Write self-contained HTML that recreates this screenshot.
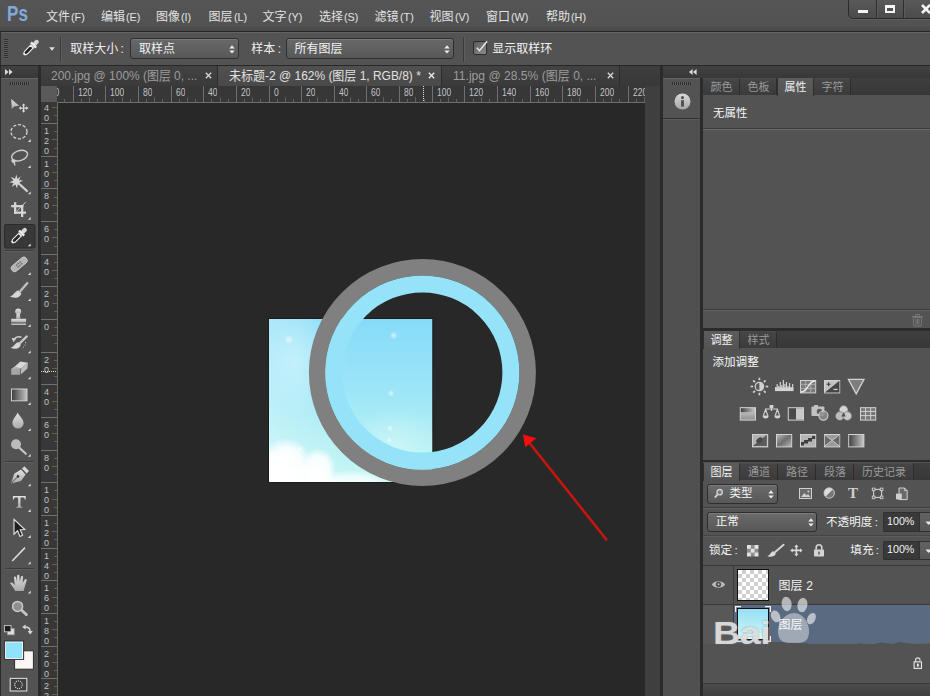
<!DOCTYPE html>
<html lang="zh"><head><meta charset="utf-8"><title>Photoshop</title>
<style>
html,body{margin:0;padding:0;}
html{width:930px;height:696px;overflow:hidden;background:#535353;}
body{width:930px;height:696px;overflow:hidden;background:#535353;font-family:"Liberation Sans","Noto Sans CJK SC",sans-serif;position:relative;}
#app{position:absolute;left:0;top:0;width:930px;height:696px;overflow:hidden;}
.b{position:absolute;box-sizing:border-box;display:block;}
.t{position:absolute;white-space:nowrap;transform-origin:0 50%;}
.cj{display:inline-block;overflow:visible;vertical-align:baseline;}
.cj text{font-family:"Liberation Sans",sans-serif;}
</style></head>
<body>
<div id="app">
<div class="b" style="left:0px;top:0px;width:930px;height:31px;background:linear-gradient(#555 0,#525252 82%,#484848 100%);"></div>
<div class="b" style="left:0px;top:31px;width:930px;height:1px;background:#262626;"></div>
<span class="t" style="left:7.4px;top:1.9px;font-size:22.5px;line-height:24.5px;color:#80aadb;transform:scaleX(0.76);font-weight:bold;letter-spacing:0.2px;">Ps</span>
<span class="t" style="left:45.9px;top:9.5px;font-size:12px;line-height:14px;color:#e2e2e2;">文件<svg class="cj" style="margin-left:1.4px" width="13.79" height="8.64" fill="#e2e2e2"><text x="0" y="8.64" font-size="10.8" textLength="13.79" lengthAdjust="spacingAndGlyphs" style="white-space:pre">(F)</text></svg></span>
<span class="t" style="left:100.9px;top:9.5px;font-size:12px;line-height:14px;color:#e2e2e2;">编辑<svg class="cj" style="margin-left:1.4px" width="14.4" height="8.64" fill="#e2e2e2"><text x="0" y="8.64" font-size="10.8" textLength="14.4" lengthAdjust="spacingAndGlyphs" style="white-space:pre">(E)</text></svg></span>
<span class="t" style="left:155.9px;top:9.5px;font-size:12px;line-height:14px;color:#e2e2e2;">图像<svg class="cj" style="margin-left:1.4px" width="10.19" height="8.64" fill="#e2e2e2"><text x="0" y="8.64" font-size="10.8" textLength="10.19" lengthAdjust="spacingAndGlyphs" style="white-space:pre">(I)</text></svg></span>
<span class="t" style="left:208.4px;top:9.5px;font-size:12px;line-height:14px;color:#e2e2e2;">图层<svg class="cj" style="margin-left:1.4px" width="13.2" height="8.64" fill="#e2e2e2"><text x="0" y="8.64" font-size="10.8" textLength="13.2" lengthAdjust="spacingAndGlyphs" style="white-space:pre">(L)</text></svg></span>
<span class="t" style="left:262.4px;top:9.5px;font-size:12px;line-height:14px;color:#e2e2e2;">文字<svg class="cj" style="margin-left:1.4px" width="14.4" height="8.64" fill="#e2e2e2"><text x="0" y="8.64" font-size="10.8" textLength="14.4" lengthAdjust="spacingAndGlyphs" style="white-space:pre">(Y)</text></svg></span>
<span class="t" style="left:318.9px;top:9.5px;font-size:12px;line-height:14px;color:#e2e2e2;">选择<svg class="cj" style="margin-left:1.4px" width="14.4" height="8.64" fill="#e2e2e2"><text x="0" y="8.64" font-size="10.8" textLength="14.4" lengthAdjust="spacingAndGlyphs" style="white-space:pre">(S)</text></svg></span>
<span class="t" style="left:374.4px;top:9.5px;font-size:12px;line-height:14px;color:#e2e2e2;">滤镜<svg class="cj" style="margin-left:1.4px" width="13.79" height="8.64" fill="#e2e2e2"><text x="0" y="8.64" font-size="10.8" textLength="13.79" lengthAdjust="spacingAndGlyphs" style="white-space:pre">(T)</text></svg></span>
<span class="t" style="left:429.4px;top:9.5px;font-size:12px;line-height:14px;color:#e2e2e2;">视图<svg class="cj" style="margin-left:1.4px" width="14.4" height="8.64" fill="#e2e2e2"><text x="0" y="8.64" font-size="10.8" textLength="14.4" lengthAdjust="spacingAndGlyphs" style="white-space:pre">(V)</text></svg></span>
<span class="t" style="left:485.9px;top:9.5px;font-size:12px;line-height:14px;color:#e2e2e2;">窗口<svg class="cj" style="margin-left:1.4px" width="17.39" height="8.64" fill="#e2e2e2"><text x="0" y="8.64" font-size="10.8" textLength="17.39" lengthAdjust="spacingAndGlyphs" style="white-space:pre">(W)</text></svg></span>
<span class="t" style="left:545.9px;top:9.5px;font-size:12px;line-height:14px;color:#e2e2e2;">帮助<svg class="cj" style="margin-left:1.4px" width="14.99" height="8.64" fill="#e2e2e2"><text x="0" y="8.64" font-size="10.8" textLength="14.99" lengthAdjust="spacingAndGlyphs" style="white-space:pre">(H)</text></svg></span>
<div class="b" style="left:848px;top:-2px;width:90px;height:21px;background:linear-gradient(#5a5a5a,#4b4b4b);border:1px solid #2c2c2c;border-radius:0 0 0 5px;box-shadow:0 1px 0 #5d5d5d;"></div>
<div class="b" style="left:876px;top:0px;width:1px;height:18px;background:#2f2f2f;"></div>
<div class="b" style="left:877px;top:0px;width:1px;height:18px;background:#5b5b5b;"></div>
<div class="b" style="left:903px;top:0px;width:1px;height:18px;background:#2f2f2f;"></div>
<div class="b" style="left:904px;top:0px;width:1px;height:18px;background:#5b5b5b;"></div>
<div class="b" style="left:858px;top:10px;width:10px;height:3px;background:#f4f4f4;"></div>
<div class="b" style="left:885px;top:5px;width:10px;height:8px;border:2px solid #f4f4f4;border-top-width:3px;"></div>
<svg class="b" style="left:920px;top:4px;" width="12" height="10" viewBox="0 0 12 10"><path d="M2 1 L10 9 M10 1 L2 9" stroke="#f4f4f4" stroke-width="2.6" fill="none"/></svg>
<div class="b" style="left:0px;top:32px;width:930px;height:1px;background:#636363;"></div>
<div class="b" style="left:0px;top:33px;width:930px;height:32px;background:#535353;"></div>
<div class="b" style="left:0px;top:65px;width:930px;height:1px;background:#282828;"></div>
<div class="b" style="left:0px;top:32px;width:1px;height:33px;background:#2e2e2e;"></div>
<div class="b" style="left:4px;top:39px;width:4px;height:20px;background:repeating-linear-gradient(#2f2f2f 0,#2f2f2f 1px,#5d5d5d 1px,#5d5d5d 2px);"></div>
<svg class="b" style="left:20px;top:34px" width="24" height="28" viewBox="20 34 24 28"><g transform="translate(31.1 47.45) rotate(45)"><rect x="-2.1" y="-10" width="4.2" height="6.4" rx="2.1" fill="#d6d6d6"/><rect x="-3.7" y="-4.6" width="7.4" height="2.3" fill="#ececec"/><rect x="-2.5" y="-2.4" width="5" height="1.6" fill="#cfcfcf"/><path d="M-1.9 -0.9 H1.9 V7.4 L0.9 9.6 H-0.9 L-1.9 7.4 Z" fill="#242424" stroke="#ededed" stroke-width="1.1" stroke-linejoin="round"/><circle cx="0" cy="9.4" r="1" fill="#f2f2f2"/></g></svg>
<svg class="b" style="left:48.8px;top:46.5px;" width="6" height="4" viewBox="0 0 6 4"><path d="M0.2 0.3 H5.8 L3 3.7 Z" fill="#e2e2e2"/></svg>
<div class="b" style="left:60px;top:37px;width:1px;height:25px;background:#3a3a3a;"></div>
<div class="b" style="left:61px;top:37px;width:1px;height:25px;background:#5e5e5e;"></div>
<span class="t" style="left:70.2px;top:41.8px;font-size:12px;line-height:14px;color:#efefef;">取样大小<span style="margin-left:2.4px">:</span></span>
<div class="b" style="left:129.8px;top:38px;width:109.2px;height:21px;background:linear-gradient(#686868,#585858);border:1px solid #2e2e2e;border-radius:3px;box-shadow:inset 0 1px 0 #7a7a7a;"></div>
<span class="t" style="left:139px;top:41.8px;font-size:12px;line-height:14px;color:#f2f2f2;">取样点</span>
<svg class="b" style="left:229px;top:44.5px;" width="6" height="9" viewBox="0 0 6 9"><path d="M0.3 3.4 L3 0.3 L5.7 3.4 Z M0.3 5.4 L3 8.5 L5.7 5.4 Z" fill="#ededed"/></svg>
<span class="t" style="left:251.3px;top:41.8px;font-size:12px;line-height:14px;color:#efefef;">样本<span style="margin-left:2.4px">:</span></span>
<div class="b" style="left:286px;top:38px;width:167.5px;height:21px;background:linear-gradient(#686868,#585858);border:1px solid #2e2e2e;border-radius:3px;box-shadow:inset 0 1px 0 #7a7a7a;"></div>
<span class="t" style="left:294.6px;top:41.8px;font-size:12px;line-height:14px;color:#f2f2f2;">所有图层</span>
<svg class="b" style="left:443.7px;top:44.5px;" width="6" height="9" viewBox="0 0 6 9"><path d="M0.3 3.4 L3 0.3 L5.7 3.4 Z M0.3 5.4 L3 8.5 L5.7 5.4 Z" fill="#ededed"/></svg>
<div class="b" style="left:463px;top:37px;width:1px;height:25px;background:#3a3a3a;"></div>
<div class="b" style="left:464px;top:37px;width:1px;height:25px;background:#5e5e5e;"></div>
<div class="b" style="left:473px;top:41px;width:14px;height:14px;background:linear-gradient(135deg,#5c5c5c,#8c8c8c);border:1px solid #2b2b2b;border-radius:2px;"></div>
<svg class="b" style="left:473px;top:38px;" width="17" height="17" viewBox="0 0 17 17"><path d="M3.8 9.8 L6.5 12.7 L14.1 3.2" fill="none" stroke="#e8e8e8" stroke-width="1.5"/></svg>
<span class="t" style="left:492.3px;top:41.8px;font-size:12px;line-height:14px;color:#f4f4f4;">显示取样环</span>
<div class="b" style="left:0px;top:66px;width:930px;height:12px;background:linear-gradient(#414141,#383838);"></div>
<div class="b" style="left:0px;top:66px;width:1px;height:630px;background:#2a2a2a;"></div>
<div class="b" style="left:38px;top:66px;width:2.5px;height:630px;background:#2b2b2b;"></div>
<div class="b" style="left:660px;top:66px;width:3px;height:630px;background:#2b2b2b;"></div>
<div class="b" style="left:700px;top:66px;width:3px;height:630px;background:#2b2b2b;"></div>
<div class="b" style="left:663px;top:66px;width:267px;height:12px;background:linear-gradient(#414141,#383838);"></div>
<svg class="b" style="left:5px;top:69px;" width="8" height="6" viewBox="0 0 8 6"><path d="M0 0 L3.6 3 L0 6 Z M4 0 L7.6 3 L4 6 Z" fill="#dcdcdc"/></svg>
<svg class="b" style="left:689px;top:69px;" width="8" height="6" viewBox="0 0 8 6"><path d="M3.6 0 L0 3 L3.6 6 Z M7.6 0 L4 3 L7.6 6 Z" fill="#dcdcdc"/></svg>
<div class="b" style="left:40.5px;top:66px;width:619.5px;height:20px;background:linear-gradient(#3e3e3e,#383838);"></div>
<div class="b" style="left:40.5px;top:66px;width:177.5px;height:20px;background:linear-gradient(#434343,#3a3a3a);border-right:1px solid #2c2c2c;"></div>
<span class="t" style="left:51px;top:69.2px;font-size:12.6px;line-height:14.6px;color:#9c9c9c;transform:scaleX(0.95);"><svg class="cj" width="101.05" height="10.08" fill="#9c9c9c"><text x="0" y="10.08" font-size="12.6" textLength="101.05" lengthAdjust="spacingAndGlyphs" style="white-space:pre">200.jpg @ 100% (</text></svg>图层<svg class="cj" width="28.01" height="10.08" fill="#9c9c9c"><text x="0" y="10.08" font-size="12.6" textLength="28.01" lengthAdjust="spacingAndGlyphs" style="white-space:pre"> 0, ...</text></svg></span>
<svg class="b" style="left:205px;top:72px;" width="7" height="7" viewBox="0 0 7 7"><path d="M0.8 0.8 L6.2 6.2 M6.2 0.8 L0.8 6.2" stroke="#dadada" stroke-width="1.25"/></svg>
<div class="b" style="left:218px;top:66px;width:224px;height:20px;background:linear-gradient(#505050,#494949);border-right:1px solid #2c2c2c;"></div>
<span class="t" style="left:229px;top:69.2px;font-size:12.6px;line-height:14.6px;color:#e0e0e0;transform:scaleX(0.95);">未标题<svg class="cj" width="70.92" height="10.08" fill="#e0e0e0"><text x="0" y="10.08" font-size="12.6" textLength="70.92" lengthAdjust="spacingAndGlyphs" style="white-space:pre">-2 @ 162% (</text></svg>图层<svg class="cj" width="67.92" height="10.08" fill="#e0e0e0"><text x="0" y="10.08" font-size="12.6" textLength="67.92" lengthAdjust="spacingAndGlyphs" style="white-space:pre"> 1, RGB/8) *</text></svg></span>
<svg class="b" style="left:428px;top:72px;" width="7" height="7" viewBox="0 0 7 7"><path d="M0.8 0.8 L6.2 6.2 M6.2 0.8 L0.8 6.2" stroke="#f0f0f0" stroke-width="1.25"/></svg>
<div class="b" style="left:442px;top:66px;width:178px;height:20px;background:linear-gradient(#434343,#3a3a3a);border-right:1px solid #2c2c2c;"></div>
<span class="t" style="left:453.3px;top:69.2px;font-size:12.6px;line-height:14.6px;color:#9c9c9c;transform:scaleX(0.95);"><svg class="cj" width="97.55" height="10.08" fill="#9c9c9c"><text x="0" y="10.08" font-size="12.6" textLength="97.55" lengthAdjust="spacingAndGlyphs" style="white-space:pre">11.jpg @ 28.5% (</text></svg>图层<svg class="cj" width="28.01" height="10.08" fill="#9c9c9c"><text x="0" y="10.08" font-size="12.6" textLength="28.01" lengthAdjust="spacingAndGlyphs" style="white-space:pre"> 0, ...</text></svg></span>
<svg class="b" style="left:606.5px;top:72px;" width="7" height="7" viewBox="0 0 7 7"><path d="M0.8 0.8 L6.2 6.2 M6.2 0.8 L0.8 6.2" stroke="#dadada" stroke-width="1.25"/></svg>
<div class="b" style="left:40.5px;top:86px;width:604.5px;height:17px;background:#373737;"></div>
<div class="b" style="left:40.5px;top:86px;width:17.5px;height:610px;background:#373737;"></div>
<div class="b" style="left:645px;top:86px;width:15px;height:610px;background:#3f3f3f;"></div>
<div class="b" style="left:40.5px;top:86px;width:16.5px;height:16px;background:#5a5a5a;"></div>
<div class="b" style="left:57px;top:102px;width:588px;height:1px;background:#6e6e6e;"></div>
<div class="b" style="left:57px;top:102px;width:1px;height:594px;background:#6e6a62;"></div>
<svg class="b" style="left:41px;top:86px;" width="604" height="16" viewBox="0 0 604 16"><rect x="23" y="13" width="1" height="3" fill="#5e5e5e"/><rect x="32" y="0" width="1" height="16" fill="#707070"/><rect x="40" y="13" width="1" height="3" fill="#5e5e5e"/><rect x="48" y="11" width="1" height="5" fill="#5e5e5e"/><rect x="56" y="13" width="1" height="3" fill="#5e5e5e"/><rect x="64" y="0" width="1" height="16" fill="#707070"/><rect x="72" y="13" width="1" height="3" fill="#5e5e5e"/><rect x="81" y="11" width="1" height="5" fill="#5e5e5e"/><rect x="89" y="13" width="1" height="3" fill="#5e5e5e"/><rect x="97" y="0" width="1" height="16" fill="#707070"/><rect x="105" y="13" width="1" height="3" fill="#5e5e5e"/><rect x="113" y="11" width="1" height="5" fill="#5e5e5e"/><rect x="121" y="13" width="1" height="3" fill="#5e5e5e"/><rect x="130" y="0" width="1" height="16" fill="#707070"/><rect x="138" y="13" width="1" height="3" fill="#5e5e5e"/><rect x="146" y="11" width="1" height="5" fill="#5e5e5e"/><rect x="154" y="13" width="1" height="3" fill="#5e5e5e"/><rect x="162" y="0" width="1" height="16" fill="#707070"/><rect x="170" y="13" width="1" height="3" fill="#5e5e5e"/><rect x="179" y="11" width="1" height="5" fill="#5e5e5e"/><rect x="187" y="13" width="1" height="3" fill="#5e5e5e"/><rect x="195" y="0" width="1" height="16" fill="#707070"/><rect x="203" y="13" width="1" height="3" fill="#5e5e5e"/><rect x="211" y="11" width="1" height="5" fill="#5e5e5e"/><rect x="219" y="13" width="1" height="3" fill="#5e5e5e"/><rect x="228" y="0" width="1" height="16" fill="#707070"/><rect x="236" y="13" width="1" height="3" fill="#5e5e5e"/><rect x="244" y="11" width="1" height="5" fill="#5e5e5e"/><rect x="252" y="13" width="1" height="3" fill="#5e5e5e"/><rect x="260" y="0" width="1" height="16" fill="#707070"/><rect x="268" y="13" width="1" height="3" fill="#5e5e5e"/><rect x="276" y="11" width="1" height="5" fill="#5e5e5e"/><rect x="285" y="13" width="1" height="3" fill="#5e5e5e"/><rect x="293" y="0" width="1" height="16" fill="#707070"/><rect x="301" y="13" width="1" height="3" fill="#5e5e5e"/><rect x="309" y="11" width="1" height="5" fill="#5e5e5e"/><rect x="317" y="13" width="1" height="3" fill="#5e5e5e"/><rect x="325" y="0" width="1" height="16" fill="#707070"/><rect x="334" y="13" width="1" height="3" fill="#5e5e5e"/><rect x="342" y="11" width="1" height="5" fill="#5e5e5e"/><rect x="350" y="13" width="1" height="3" fill="#5e5e5e"/><rect x="358" y="0" width="1" height="16" fill="#707070"/><rect x="366" y="13" width="1" height="3" fill="#5e5e5e"/><rect x="374" y="11" width="1" height="5" fill="#5e5e5e"/><rect x="383" y="13" width="1" height="3" fill="#5e5e5e"/><rect x="391" y="0" width="1" height="16" fill="#707070"/><rect x="399" y="13" width="1" height="3" fill="#5e5e5e"/><rect x="407" y="11" width="1" height="5" fill="#5e5e5e"/><rect x="415" y="13" width="1" height="3" fill="#5e5e5e"/><rect x="423" y="0" width="1" height="16" fill="#707070"/><rect x="432" y="13" width="1" height="3" fill="#5e5e5e"/><rect x="440" y="11" width="1" height="5" fill="#5e5e5e"/><rect x="448" y="13" width="1" height="3" fill="#5e5e5e"/><rect x="456" y="0" width="1" height="16" fill="#707070"/><rect x="464" y="13" width="1" height="3" fill="#5e5e5e"/><rect x="472" y="11" width="1" height="5" fill="#5e5e5e"/><rect x="481" y="13" width="1" height="3" fill="#5e5e5e"/><rect x="489" y="0" width="1" height="16" fill="#707070"/><rect x="497" y="13" width="1" height="3" fill="#5e5e5e"/><rect x="505" y="11" width="1" height="5" fill="#5e5e5e"/><rect x="513" y="13" width="1" height="3" fill="#5e5e5e"/><rect x="521" y="0" width="1" height="16" fill="#707070"/><rect x="530" y="13" width="1" height="3" fill="#5e5e5e"/><rect x="538" y="11" width="1" height="5" fill="#5e5e5e"/><rect x="546" y="13" width="1" height="3" fill="#5e5e5e"/><rect x="554" y="0" width="1" height="16" fill="#707070"/><rect x="562" y="13" width="1" height="3" fill="#5e5e5e"/><rect x="570" y="11" width="1" height="5" fill="#5e5e5e"/><rect x="578" y="13" width="1" height="3" fill="#5e5e5e"/><rect x="587" y="0" width="1" height="16" fill="#707070"/><rect x="595" y="13" width="1" height="3" fill="#5e5e5e"/><rect x="603" y="11" width="1" height="5" fill="#5e5e5e"/></svg>
<span class="t" style="left:77.6px;top:86.6px;font-size:10px;line-height:12px;color:#c4c4c4;transform:scaleX(0.85);max-width:666.94px;overflow:hidden;"><svg class="cj" width="16.68" height="8" fill="#c4c4c4"><text x="0" y="8" font-size="10" textLength="16.68" lengthAdjust="spacingAndGlyphs" style="white-space:pre">120</text></svg></span>
<span class="t" style="left:109.6px;top:86.6px;font-size:10px;line-height:12px;color:#c4c4c4;transform:scaleX(0.85);max-width:629.29px;overflow:hidden;"><svg class="cj" width="16.68" height="8" fill="#c4c4c4"><text x="0" y="8" font-size="10" textLength="16.68" lengthAdjust="spacingAndGlyphs" style="white-space:pre">100</text></svg></span>
<span class="t" style="left:142.6px;top:86.6px;font-size:10px;line-height:12px;color:#c4c4c4;transform:scaleX(0.85);max-width:590.47px;overflow:hidden;"><svg class="cj" width="11.12" height="8" fill="#c4c4c4"><text x="0" y="8" font-size="10" textLength="11.12" lengthAdjust="spacingAndGlyphs" style="white-space:pre">80</text></svg></span>
<span class="t" style="left:175.6px;top:86.6px;font-size:10px;line-height:12px;color:#c4c4c4;transform:scaleX(0.85);max-width:551.65px;overflow:hidden;"><svg class="cj" width="11.12" height="8" fill="#c4c4c4"><text x="0" y="8" font-size="10" textLength="11.12" lengthAdjust="spacingAndGlyphs" style="white-space:pre">60</text></svg></span>
<span class="t" style="left:207.6px;top:86.6px;font-size:10px;line-height:12px;color:#c4c4c4;transform:scaleX(0.85);max-width:514px;overflow:hidden;"><svg class="cj" width="11.12" height="8" fill="#c4c4c4"><text x="0" y="8" font-size="10" textLength="11.12" lengthAdjust="spacingAndGlyphs" style="white-space:pre">40</text></svg></span>
<span class="t" style="left:240.6px;top:86.6px;font-size:10px;line-height:12px;color:#c4c4c4;transform:scaleX(0.85);max-width:475.18px;overflow:hidden;"><svg class="cj" width="11.12" height="8" fill="#c4c4c4"><text x="0" y="8" font-size="10" textLength="11.12" lengthAdjust="spacingAndGlyphs" style="white-space:pre">20</text></svg></span>
<span class="t" style="left:273.6px;top:86.6px;font-size:10px;line-height:12px;color:#c4c4c4;transform:scaleX(0.85);max-width:436.35px;overflow:hidden;"><svg class="cj" width="5.56" height="8" fill="#c4c4c4"><text x="0" y="8" font-size="10" textLength="5.56" lengthAdjust="spacingAndGlyphs" style="white-space:pre">0</text></svg></span>
<span class="t" style="left:305.6px;top:86.6px;font-size:10px;line-height:12px;color:#c4c4c4;transform:scaleX(0.85);max-width:398.71px;overflow:hidden;"><svg class="cj" width="11.12" height="8" fill="#c4c4c4"><text x="0" y="8" font-size="10" textLength="11.12" lengthAdjust="spacingAndGlyphs" style="white-space:pre">20</text></svg></span>
<span class="t" style="left:338.6px;top:86.6px;font-size:10px;line-height:12px;color:#c4c4c4;transform:scaleX(0.85);max-width:359.88px;overflow:hidden;"><svg class="cj" width="11.12" height="8" fill="#c4c4c4"><text x="0" y="8" font-size="10" textLength="11.12" lengthAdjust="spacingAndGlyphs" style="white-space:pre">40</text></svg></span>
<span class="t" style="left:370.6px;top:86.6px;font-size:10px;line-height:12px;color:#c4c4c4;transform:scaleX(0.85);max-width:322.24px;overflow:hidden;"><svg class="cj" width="11.12" height="8" fill="#c4c4c4"><text x="0" y="8" font-size="10" textLength="11.12" lengthAdjust="spacingAndGlyphs" style="white-space:pre">60</text></svg></span>
<span class="t" style="left:403.6px;top:86.6px;font-size:10px;line-height:12px;color:#c4c4c4;transform:scaleX(0.85);max-width:283.41px;overflow:hidden;"><svg class="cj" width="11.12" height="8" fill="#c4c4c4"><text x="0" y="8" font-size="10" textLength="11.12" lengthAdjust="spacingAndGlyphs" style="white-space:pre">80</text></svg></span>
<span class="t" style="left:436.6px;top:86.6px;font-size:10px;line-height:12px;color:#c4c4c4;transform:scaleX(0.85);max-width:244.59px;overflow:hidden;"><svg class="cj" width="16.68" height="8" fill="#c4c4c4"><text x="0" y="8" font-size="10" textLength="16.68" lengthAdjust="spacingAndGlyphs" style="white-space:pre">100</text></svg></span>
<span class="t" style="left:468.6px;top:86.6px;font-size:10px;line-height:12px;color:#c4c4c4;transform:scaleX(0.85);max-width:206.94px;overflow:hidden;"><svg class="cj" width="16.68" height="8" fill="#c4c4c4"><text x="0" y="8" font-size="10" textLength="16.68" lengthAdjust="spacingAndGlyphs" style="white-space:pre">120</text></svg></span>
<span class="t" style="left:501.6px;top:86.6px;font-size:10px;line-height:12px;color:#c4c4c4;transform:scaleX(0.85);max-width:168.12px;overflow:hidden;"><svg class="cj" width="16.68" height="8" fill="#c4c4c4"><text x="0" y="8" font-size="10" textLength="16.68" lengthAdjust="spacingAndGlyphs" style="white-space:pre">140</text></svg></span>
<span class="t" style="left:534.6px;top:86.6px;font-size:10px;line-height:12px;color:#c4c4c4;transform:scaleX(0.85);max-width:129.29px;overflow:hidden;"><svg class="cj" width="16.68" height="8" fill="#c4c4c4"><text x="0" y="8" font-size="10" textLength="16.68" lengthAdjust="spacingAndGlyphs" style="white-space:pre">160</text></svg></span>
<span class="t" style="left:566.6px;top:86.6px;font-size:10px;line-height:12px;color:#c4c4c4;transform:scaleX(0.85);max-width:91.65px;overflow:hidden;"><svg class="cj" width="16.68" height="8" fill="#c4c4c4"><text x="0" y="8" font-size="10" textLength="16.68" lengthAdjust="spacingAndGlyphs" style="white-space:pre">180</text></svg></span>
<span class="t" style="left:599.6px;top:86.6px;font-size:10px;line-height:12px;color:#c4c4c4;transform:scaleX(0.85);max-width:52.82px;overflow:hidden;"><svg class="cj" width="16.68" height="8" fill="#c4c4c4"><text x="0" y="8" font-size="10" textLength="16.68" lengthAdjust="spacingAndGlyphs" style="white-space:pre">200</text></svg></span>
<span class="t" style="left:632.6px;top:86.6px;font-size:10px;line-height:12px;color:#c4c4c4;transform:scaleX(0.85);max-width:14px;overflow:hidden;"><svg class="cj" width="16.68" height="8" fill="#c4c4c4"><text x="0" y="8" font-size="10" textLength="16.68" lengthAdjust="spacingAndGlyphs" style="white-space:pre">220</text></svg></span>
<div class="b" style="left:57px;top:86px;width:6px;height:16px;overflow:hidden;"><span class="t" style="left:-11.8px;top:0.6px;font-size:10px;line-height:12px;color:#c4c4c4;transform:scaleX(0.85);"><svg class="cj" width="16.68" height="8" fill="#c4c4c4"><text x="0" y="8" font-size="10" textLength="16.68" lengthAdjust="spacingAndGlyphs" style="white-space:pre">140</text></svg></span></div>
<div class="b" style="left:423px;top:86px;width:1px;height:16px;background:repeating-linear-gradient(#e0e0e0 0,#e0e0e0 1px,transparent 1px,transparent 2px);"></div>
<span class="t" style="left:44.2px;top:101.1px;font-size:9.4px;line-height:11.4px;color:#c2c2c2;transform:scaleX(0.96);"><svg class="cj" width="5.23" height="7.52" fill="#c2c2c2"><text x="0" y="7.52" font-size="9.4" textLength="5.23" lengthAdjust="spacingAndGlyphs" style="white-space:pre">4</text></svg></span>
<span class="t" style="left:44.2px;top:111.1px;font-size:9.4px;line-height:11.4px;color:#c2c2c2;transform:scaleX(0.96);"><svg class="cj" width="5.23" height="7.52" fill="#c2c2c2"><text x="0" y="7.52" font-size="9.4" textLength="5.23" lengthAdjust="spacingAndGlyphs" style="white-space:pre">0</text></svg></span>
<span class="t" style="left:44.2px;top:124.1px;font-size:9.4px;line-height:11.4px;color:#c2c2c2;transform:scaleX(0.96);"><svg class="cj" width="5.23" height="7.52" fill="#c2c2c2"><text x="0" y="7.52" font-size="9.4" textLength="5.23" lengthAdjust="spacingAndGlyphs" style="white-space:pre">1</text></svg></span>
<span class="t" style="left:44.2px;top:134.1px;font-size:9.4px;line-height:11.4px;color:#c2c2c2;transform:scaleX(0.96);"><svg class="cj" width="5.23" height="7.52" fill="#c2c2c2"><text x="0" y="7.52" font-size="9.4" textLength="5.23" lengthAdjust="spacingAndGlyphs" style="white-space:pre">2</text></svg></span>
<span class="t" style="left:44.2px;top:144.1px;font-size:9.4px;line-height:11.4px;color:#c2c2c2;transform:scaleX(0.96);"><svg class="cj" width="5.23" height="7.52" fill="#c2c2c2"><text x="0" y="7.52" font-size="9.4" textLength="5.23" lengthAdjust="spacingAndGlyphs" style="white-space:pre">0</text></svg></span>
<span class="t" style="left:44.2px;top:157.1px;font-size:9.4px;line-height:11.4px;color:#c2c2c2;transform:scaleX(0.96);"><svg class="cj" width="5.23" height="7.52" fill="#c2c2c2"><text x="0" y="7.52" font-size="9.4" textLength="5.23" lengthAdjust="spacingAndGlyphs" style="white-space:pre">1</text></svg></span>
<span class="t" style="left:44.2px;top:167.1px;font-size:9.4px;line-height:11.4px;color:#c2c2c2;transform:scaleX(0.96);"><svg class="cj" width="5.23" height="7.52" fill="#c2c2c2"><text x="0" y="7.52" font-size="9.4" textLength="5.23" lengthAdjust="spacingAndGlyphs" style="white-space:pre">0</text></svg></span>
<span class="t" style="left:44.2px;top:177.1px;font-size:9.4px;line-height:11.4px;color:#c2c2c2;transform:scaleX(0.96);"><svg class="cj" width="5.23" height="7.52" fill="#c2c2c2"><text x="0" y="7.52" font-size="9.4" textLength="5.23" lengthAdjust="spacingAndGlyphs" style="white-space:pre">0</text></svg></span>
<span class="t" style="left:44.2px;top:189.1px;font-size:9.4px;line-height:11.4px;color:#c2c2c2;transform:scaleX(0.96);"><svg class="cj" width="5.23" height="7.52" fill="#c2c2c2"><text x="0" y="7.52" font-size="9.4" textLength="5.23" lengthAdjust="spacingAndGlyphs" style="white-space:pre">8</text></svg></span>
<span class="t" style="left:44.2px;top:199.1px;font-size:9.4px;line-height:11.4px;color:#c2c2c2;transform:scaleX(0.96);"><svg class="cj" width="5.23" height="7.52" fill="#c2c2c2"><text x="0" y="7.52" font-size="9.4" textLength="5.23" lengthAdjust="spacingAndGlyphs" style="white-space:pre">0</text></svg></span>
<span class="t" style="left:44.2px;top:222.1px;font-size:9.4px;line-height:11.4px;color:#c2c2c2;transform:scaleX(0.96);"><svg class="cj" width="5.23" height="7.52" fill="#c2c2c2"><text x="0" y="7.52" font-size="9.4" textLength="5.23" lengthAdjust="spacingAndGlyphs" style="white-space:pre">6</text></svg></span>
<span class="t" style="left:44.2px;top:232.1px;font-size:9.4px;line-height:11.4px;color:#c2c2c2;transform:scaleX(0.96);"><svg class="cj" width="5.23" height="7.52" fill="#c2c2c2"><text x="0" y="7.52" font-size="9.4" textLength="5.23" lengthAdjust="spacingAndGlyphs" style="white-space:pre">0</text></svg></span>
<span class="t" style="left:44.2px;top:255.1px;font-size:9.4px;line-height:11.4px;color:#c2c2c2;transform:scaleX(0.96);"><svg class="cj" width="5.23" height="7.52" fill="#c2c2c2"><text x="0" y="7.52" font-size="9.4" textLength="5.23" lengthAdjust="spacingAndGlyphs" style="white-space:pre">4</text></svg></span>
<span class="t" style="left:44.2px;top:265.1px;font-size:9.4px;line-height:11.4px;color:#c2c2c2;transform:scaleX(0.96);"><svg class="cj" width="5.23" height="7.52" fill="#c2c2c2"><text x="0" y="7.52" font-size="9.4" textLength="5.23" lengthAdjust="spacingAndGlyphs" style="white-space:pre">0</text></svg></span>
<span class="t" style="left:44.2px;top:287.1px;font-size:9.4px;line-height:11.4px;color:#c2c2c2;transform:scaleX(0.96);"><svg class="cj" width="5.23" height="7.52" fill="#c2c2c2"><text x="0" y="7.52" font-size="9.4" textLength="5.23" lengthAdjust="spacingAndGlyphs" style="white-space:pre">2</text></svg></span>
<span class="t" style="left:44.2px;top:297.1px;font-size:9.4px;line-height:11.4px;color:#c2c2c2;transform:scaleX(0.96);"><svg class="cj" width="5.23" height="7.52" fill="#c2c2c2"><text x="0" y="7.52" font-size="9.4" textLength="5.23" lengthAdjust="spacingAndGlyphs" style="white-space:pre">0</text></svg></span>
<span class="t" style="left:44.2px;top:320.1px;font-size:9.4px;line-height:11.4px;color:#c2c2c2;transform:scaleX(0.96);"><svg class="cj" width="5.23" height="7.52" fill="#c2c2c2"><text x="0" y="7.52" font-size="9.4" textLength="5.23" lengthAdjust="spacingAndGlyphs" style="white-space:pre">0</text></svg></span>
<span class="t" style="left:44.2px;top:353.1px;font-size:9.4px;line-height:11.4px;color:#c2c2c2;transform:scaleX(0.96);"><svg class="cj" width="5.23" height="7.52" fill="#c2c2c2"><text x="0" y="7.52" font-size="9.4" textLength="5.23" lengthAdjust="spacingAndGlyphs" style="white-space:pre">2</text></svg></span>
<span class="t" style="left:44.2px;top:363.1px;font-size:9.4px;line-height:11.4px;color:#c2c2c2;transform:scaleX(0.96);"><svg class="cj" width="5.23" height="7.52" fill="#c2c2c2"><text x="0" y="7.52" font-size="9.4" textLength="5.23" lengthAdjust="spacingAndGlyphs" style="white-space:pre">0</text></svg></span>
<span class="t" style="left:44.2px;top:385.1px;font-size:9.4px;line-height:11.4px;color:#c2c2c2;transform:scaleX(0.96);"><svg class="cj" width="5.23" height="7.52" fill="#c2c2c2"><text x="0" y="7.52" font-size="9.4" textLength="5.23" lengthAdjust="spacingAndGlyphs" style="white-space:pre">4</text></svg></span>
<span class="t" style="left:44.2px;top:395.1px;font-size:9.4px;line-height:11.4px;color:#c2c2c2;transform:scaleX(0.96);"><svg class="cj" width="5.23" height="7.52" fill="#c2c2c2"><text x="0" y="7.52" font-size="9.4" textLength="5.23" lengthAdjust="spacingAndGlyphs" style="white-space:pre">0</text></svg></span>
<span class="t" style="left:44.2px;top:418.1px;font-size:9.4px;line-height:11.4px;color:#c2c2c2;transform:scaleX(0.96);"><svg class="cj" width="5.23" height="7.52" fill="#c2c2c2"><text x="0" y="7.52" font-size="9.4" textLength="5.23" lengthAdjust="spacingAndGlyphs" style="white-space:pre">6</text></svg></span>
<span class="t" style="left:44.2px;top:428.1px;font-size:9.4px;line-height:11.4px;color:#c2c2c2;transform:scaleX(0.96);"><svg class="cj" width="5.23" height="7.52" fill="#c2c2c2"><text x="0" y="7.52" font-size="9.4" textLength="5.23" lengthAdjust="spacingAndGlyphs" style="white-space:pre">0</text></svg></span>
<span class="t" style="left:44.2px;top:451.1px;font-size:9.4px;line-height:11.4px;color:#c2c2c2;transform:scaleX(0.96);"><svg class="cj" width="5.23" height="7.52" fill="#c2c2c2"><text x="0" y="7.52" font-size="9.4" textLength="5.23" lengthAdjust="spacingAndGlyphs" style="white-space:pre">8</text></svg></span>
<span class="t" style="left:44.2px;top:461.1px;font-size:9.4px;line-height:11.4px;color:#c2c2c2;transform:scaleX(0.96);"><svg class="cj" width="5.23" height="7.52" fill="#c2c2c2"><text x="0" y="7.52" font-size="9.4" textLength="5.23" lengthAdjust="spacingAndGlyphs" style="white-space:pre">0</text></svg></span>
<span class="t" style="left:44.2px;top:483.1px;font-size:9.4px;line-height:11.4px;color:#c2c2c2;transform:scaleX(0.96);"><svg class="cj" width="5.23" height="7.52" fill="#c2c2c2"><text x="0" y="7.52" font-size="9.4" textLength="5.23" lengthAdjust="spacingAndGlyphs" style="white-space:pre">1</text></svg></span>
<span class="t" style="left:44.2px;top:493.1px;font-size:9.4px;line-height:11.4px;color:#c2c2c2;transform:scaleX(0.96);"><svg class="cj" width="5.23" height="7.52" fill="#c2c2c2"><text x="0" y="7.52" font-size="9.4" textLength="5.23" lengthAdjust="spacingAndGlyphs" style="white-space:pre">0</text></svg></span>
<span class="t" style="left:44.2px;top:503.1px;font-size:9.4px;line-height:11.4px;color:#c2c2c2;transform:scaleX(0.96);"><svg class="cj" width="5.23" height="7.52" fill="#c2c2c2"><text x="0" y="7.52" font-size="9.4" textLength="5.23" lengthAdjust="spacingAndGlyphs" style="white-space:pre">0</text></svg></span>
<span class="t" style="left:44.2px;top:516.1px;font-size:9.4px;line-height:11.4px;color:#c2c2c2;transform:scaleX(0.96);"><svg class="cj" width="5.23" height="7.52" fill="#c2c2c2"><text x="0" y="7.52" font-size="9.4" textLength="5.23" lengthAdjust="spacingAndGlyphs" style="white-space:pre">1</text></svg></span>
<span class="t" style="left:44.2px;top:526.1px;font-size:9.4px;line-height:11.4px;color:#c2c2c2;transform:scaleX(0.96);"><svg class="cj" width="5.23" height="7.52" fill="#c2c2c2"><text x="0" y="7.52" font-size="9.4" textLength="5.23" lengthAdjust="spacingAndGlyphs" style="white-space:pre">2</text></svg></span>
<span class="t" style="left:44.2px;top:536.1px;font-size:9.4px;line-height:11.4px;color:#c2c2c2;transform:scaleX(0.96);"><svg class="cj" width="5.23" height="7.52" fill="#c2c2c2"><text x="0" y="7.52" font-size="9.4" textLength="5.23" lengthAdjust="spacingAndGlyphs" style="white-space:pre">0</text></svg></span>
<span class="t" style="left:44.2px;top:549.1px;font-size:9.4px;line-height:11.4px;color:#c2c2c2;transform:scaleX(0.96);"><svg class="cj" width="5.23" height="7.52" fill="#c2c2c2"><text x="0" y="7.52" font-size="9.4" textLength="5.23" lengthAdjust="spacingAndGlyphs" style="white-space:pre">1</text></svg></span>
<span class="t" style="left:44.2px;top:559.1px;font-size:9.4px;line-height:11.4px;color:#c2c2c2;transform:scaleX(0.96);"><svg class="cj" width="5.23" height="7.52" fill="#c2c2c2"><text x="0" y="7.52" font-size="9.4" textLength="5.23" lengthAdjust="spacingAndGlyphs" style="white-space:pre">4</text></svg></span>
<span class="t" style="left:44.2px;top:569.1px;font-size:9.4px;line-height:11.4px;color:#c2c2c2;transform:scaleX(0.96);"><svg class="cj" width="5.23" height="7.52" fill="#c2c2c2"><text x="0" y="7.52" font-size="9.4" textLength="5.23" lengthAdjust="spacingAndGlyphs" style="white-space:pre">0</text></svg></span>
<span class="t" style="left:44.2px;top:581.1px;font-size:9.4px;line-height:11.4px;color:#c2c2c2;transform:scaleX(0.96);"><svg class="cj" width="5.23" height="7.52" fill="#c2c2c2"><text x="0" y="7.52" font-size="9.4" textLength="5.23" lengthAdjust="spacingAndGlyphs" style="white-space:pre">1</text></svg></span>
<span class="t" style="left:44.2px;top:591.1px;font-size:9.4px;line-height:11.4px;color:#c2c2c2;transform:scaleX(0.96);"><svg class="cj" width="5.23" height="7.52" fill="#c2c2c2"><text x="0" y="7.52" font-size="9.4" textLength="5.23" lengthAdjust="spacingAndGlyphs" style="white-space:pre">6</text></svg></span>
<span class="t" style="left:44.2px;top:601.1px;font-size:9.4px;line-height:11.4px;color:#c2c2c2;transform:scaleX(0.96);"><svg class="cj" width="5.23" height="7.52" fill="#c2c2c2"><text x="0" y="7.52" font-size="9.4" textLength="5.23" lengthAdjust="spacingAndGlyphs" style="white-space:pre">0</text></svg></span>
<span class="t" style="left:44.2px;top:614.1px;font-size:9.4px;line-height:11.4px;color:#c2c2c2;transform:scaleX(0.96);"><svg class="cj" width="5.23" height="7.52" fill="#c2c2c2"><text x="0" y="7.52" font-size="9.4" textLength="5.23" lengthAdjust="spacingAndGlyphs" style="white-space:pre">1</text></svg></span>
<span class="t" style="left:44.2px;top:624.1px;font-size:9.4px;line-height:11.4px;color:#c2c2c2;transform:scaleX(0.96);"><svg class="cj" width="5.23" height="7.52" fill="#c2c2c2"><text x="0" y="7.52" font-size="9.4" textLength="5.23" lengthAdjust="spacingAndGlyphs" style="white-space:pre">8</text></svg></span>
<span class="t" style="left:44.2px;top:634.1px;font-size:9.4px;line-height:11.4px;color:#c2c2c2;transform:scaleX(0.96);"><svg class="cj" width="5.23" height="7.52" fill="#c2c2c2"><text x="0" y="7.52" font-size="9.4" textLength="5.23" lengthAdjust="spacingAndGlyphs" style="white-space:pre">0</text></svg></span>
<span class="t" style="left:44.2px;top:647.1px;font-size:9.4px;line-height:11.4px;color:#c2c2c2;transform:scaleX(0.96);"><svg class="cj" width="5.23" height="7.52" fill="#c2c2c2"><text x="0" y="7.52" font-size="9.4" textLength="5.23" lengthAdjust="spacingAndGlyphs" style="white-space:pre">2</text></svg></span>
<span class="t" style="left:44.2px;top:657.1px;font-size:9.4px;line-height:11.4px;color:#c2c2c2;transform:scaleX(0.96);"><svg class="cj" width="5.23" height="7.52" fill="#c2c2c2"><text x="0" y="7.52" font-size="9.4" textLength="5.23" lengthAdjust="spacingAndGlyphs" style="white-space:pre">0</text></svg></span>
<span class="t" style="left:44.2px;top:667.1px;font-size:9.4px;line-height:11.4px;color:#c2c2c2;transform:scaleX(0.96);"><svg class="cj" width="5.23" height="7.52" fill="#c2c2c2"><text x="0" y="7.52" font-size="9.4" textLength="5.23" lengthAdjust="spacingAndGlyphs" style="white-space:pre">0</text></svg></span>
<span class="t" style="left:44.2px;top:679.1px;font-size:9.4px;line-height:11.4px;color:#c2c2c2;transform:scaleX(0.96);"><svg class="cj" width="5.23" height="7.52" fill="#c2c2c2"><text x="0" y="7.52" font-size="9.4" textLength="5.23" lengthAdjust="spacingAndGlyphs" style="white-space:pre">2</text></svg></span>
<span class="t" style="left:44.2px;top:689.1px;font-size:9.4px;line-height:11.4px;color:#c2c2c2;transform:scaleX(0.96);"><svg class="cj" width="5.23" height="7.52" fill="#c2c2c2"><text x="0" y="7.52" font-size="9.4" textLength="5.23" lengthAdjust="spacingAndGlyphs" style="white-space:pre">2</text></svg></span>
<svg class="b" style="left:41px;top:86px;" width="16" height="610" viewBox="0 0 16 610"><rect x="11" y="21" width="5" height="1" fill="#5e5e5e"/><rect x="13" y="29" width="3" height="1" fill="#5e5e5e"/><rect x="0" y="37" width="16" height="1" fill="#707070"/><rect x="13" y="45" width="3" height="1" fill="#5e5e5e"/><rect x="11" y="53" width="5" height="1" fill="#5e5e5e"/><rect x="13" y="62" width="3" height="1" fill="#5e5e5e"/><rect x="0" y="70" width="16" height="1" fill="#707070"/><rect x="13" y="78" width="3" height="1" fill="#5e5e5e"/><rect x="11" y="86" width="5" height="1" fill="#5e5e5e"/><rect x="13" y="94" width="3" height="1" fill="#5e5e5e"/><rect x="0" y="102" width="16" height="1" fill="#707070"/><rect x="13" y="111" width="3" height="1" fill="#5e5e5e"/><rect x="11" y="119" width="5" height="1" fill="#5e5e5e"/><rect x="13" y="127" width="3" height="1" fill="#5e5e5e"/><rect x="0" y="135" width="16" height="1" fill="#707070"/><rect x="13" y="143" width="3" height="1" fill="#5e5e5e"/><rect x="11" y="151" width="5" height="1" fill="#5e5e5e"/><rect x="13" y="160" width="3" height="1" fill="#5e5e5e"/><rect x="0" y="168" width="16" height="1" fill="#707070"/><rect x="13" y="176" width="3" height="1" fill="#5e5e5e"/><rect x="11" y="184" width="5" height="1" fill="#5e5e5e"/><rect x="13" y="192" width="3" height="1" fill="#5e5e5e"/><rect x="0" y="200" width="16" height="1" fill="#707070"/><rect x="13" y="209" width="3" height="1" fill="#5e5e5e"/><rect x="11" y="217" width="5" height="1" fill="#5e5e5e"/><rect x="13" y="225" width="3" height="1" fill="#5e5e5e"/><rect x="0" y="233" width="16" height="1" fill="#707070"/><rect x="13" y="241" width="3" height="1" fill="#5e5e5e"/><rect x="11" y="249" width="5" height="1" fill="#5e5e5e"/><rect x="13" y="257" width="3" height="1" fill="#5e5e5e"/><rect x="0" y="266" width="16" height="1" fill="#707070"/><rect x="13" y="274" width="3" height="1" fill="#5e5e5e"/><rect x="11" y="282" width="5" height="1" fill="#5e5e5e"/><rect x="13" y="290" width="3" height="1" fill="#5e5e5e"/><rect x="0" y="298" width="16" height="1" fill="#707070"/><rect x="13" y="306" width="3" height="1" fill="#5e5e5e"/><rect x="11" y="315" width="5" height="1" fill="#5e5e5e"/><rect x="13" y="323" width="3" height="1" fill="#5e5e5e"/><rect x="0" y="331" width="16" height="1" fill="#707070"/><rect x="13" y="339" width="3" height="1" fill="#5e5e5e"/><rect x="11" y="347" width="5" height="1" fill="#5e5e5e"/><rect x="13" y="355" width="3" height="1" fill="#5e5e5e"/><rect x="0" y="364" width="16" height="1" fill="#707070"/><rect x="13" y="372" width="3" height="1" fill="#5e5e5e"/><rect x="11" y="380" width="5" height="1" fill="#5e5e5e"/><rect x="13" y="388" width="3" height="1" fill="#5e5e5e"/><rect x="0" y="396" width="16" height="1" fill="#707070"/><rect x="13" y="404" width="3" height="1" fill="#5e5e5e"/><rect x="11" y="413" width="5" height="1" fill="#5e5e5e"/><rect x="13" y="421" width="3" height="1" fill="#5e5e5e"/><rect x="0" y="429" width="16" height="1" fill="#707070"/><rect x="13" y="437" width="3" height="1" fill="#5e5e5e"/><rect x="11" y="445" width="5" height="1" fill="#5e5e5e"/><rect x="13" y="453" width="3" height="1" fill="#5e5e5e"/><rect x="0" y="462" width="16" height="1" fill="#707070"/><rect x="13" y="470" width="3" height="1" fill="#5e5e5e"/><rect x="11" y="478" width="5" height="1" fill="#5e5e5e"/><rect x="13" y="486" width="3" height="1" fill="#5e5e5e"/><rect x="0" y="494" width="16" height="1" fill="#707070"/><rect x="13" y="502" width="3" height="1" fill="#5e5e5e"/><rect x="11" y="511" width="5" height="1" fill="#5e5e5e"/><rect x="13" y="519" width="3" height="1" fill="#5e5e5e"/><rect x="0" y="527" width="16" height="1" fill="#707070"/><rect x="13" y="535" width="3" height="1" fill="#5e5e5e"/><rect x="11" y="543" width="5" height="1" fill="#5e5e5e"/><rect x="13" y="551" width="3" height="1" fill="#5e5e5e"/><rect x="0" y="560" width="16" height="1" fill="#707070"/><rect x="13" y="568" width="3" height="1" fill="#5e5e5e"/><rect x="11" y="576" width="5" height="1" fill="#5e5e5e"/><rect x="13" y="584" width="3" height="1" fill="#5e5e5e"/><rect x="0" y="592" width="16" height="1" fill="#707070"/><rect x="13" y="600" width="3" height="1" fill="#5e5e5e"/><rect x="11" y="608" width="5" height="1" fill="#5e5e5e"/></svg>
<div class="b" style="left:41px;top:371px;width:16px;height:1px;background:repeating-linear-gradient(90deg,#e0e0e0 0,#e0e0e0 1px,transparent 1px,transparent 2px);"></div>
<div class="b" style="left:58px;top:103px;width:587px;height:593px;background:#282828;"></div>
<svg class="b" style="left:58px;top:103px" width="587" height="593" viewBox="58 103 587 593"><defs><linearGradient id="sky" x1="0" y1="0" x2="0" y2="1"><stop offset="0" stop-color="#87dbf8"/><stop offset="0.45" stop-color="#9de6f7"/><stop offset="0.8" stop-color="#b9f2f4"/><stop offset="1" stop-color="#c9f6f5"/></linearGradient><radialGradient id="cl"><stop offset="0" stop-color="#fff" stop-opacity="1"/><stop offset="0.6" stop-color="#fff" stop-opacity="0.85"/><stop offset="1" stop-color="#fff" stop-opacity="0"/></radialGradient><radialGradient id="bk"><stop offset="0" stop-color="#fff" stop-opacity="0.9"/><stop offset="1" stop-color="#fff" stop-opacity="0"/></radialGradient><radialGradient id="hz"><stop offset="0" stop-color="#d8f8fb" stop-opacity="0.55"/><stop offset="1" stop-color="#d8f8fb" stop-opacity="0"/></radialGradient><linearGradient id="lh" x1="0" y1="0" x2="1" y2="0"><stop offset="0" stop-color="#e4f9fc" stop-opacity="0.42"/><stop offset="1" stop-color="#e4f9fc" stop-opacity="0"/></linearGradient><clipPath id="imc"><rect x="269" y="319" width="163.5" height="163"/></clipPath></defs><rect x="268" y="318" width="165.5" height="165" fill="#1d1d1d"/><g clip-path="url(#imc)"><rect x="269" y="319" width="163.5" height="163" fill="url(#sky)"/><rect x="269" y="319" width="80" height="163" fill="url(#lh)"/><ellipse cx="296" cy="362" rx="34" ry="52" fill="url(#hz)"/><ellipse cx="395" cy="445" rx="48" ry="36" fill="url(#hz)"/><ellipse cx="286" cy="462" rx="26" ry="24" fill="url(#cl)"/><ellipse cx="272" cy="474" rx="26" ry="26" fill="url(#cl)"/><ellipse cx="318" cy="468" rx="18" ry="20" fill="url(#cl)"/><ellipse cx="300" cy="482" rx="44" ry="20" fill="url(#cl)"/><ellipse cx="352" cy="486" rx="40" ry="16" fill="url(#cl)" opacity="0.8"/><circle cx="289" cy="339.6" r="4.5" fill="url(#bk)" opacity="0.7"/><circle cx="393.7" cy="335.5" r="4.2" fill="url(#bk)" opacity="0.7"/><circle cx="391" cy="393.3" r="3.6" fill="url(#bk)" opacity="0.7"/><circle cx="390" cy="428.4" r="3.4" fill="url(#bk)" opacity="0.7"/><circle cx="389.4" cy="440" r="3" fill="url(#bk)" opacity="0.7"/><circle cx="300" cy="449" r="3" fill="url(#bk)" opacity="0.7"/></g><circle cx="422.4" cy="372.5" r="105.25" fill="none" stroke="#808080" stroke-width="16.5"/><circle cx="422.4" cy="372.5" r="88.5" fill="none" stroke="#94e3f8" stroke-width="17"/><path d="M606.9 540.2 L529.5 443" stroke="#c4160f" stroke-width="2.6" fill="none"/><path d="M523 434.5 L536.3 438.2 L525.2 447.3 Z" fill="#f3100d"/></svg>
<div class="b" style="left:1px;top:78px;width:37px;height:618px;background:#535353;border-top:1px solid #646464;"></div>
<div class="b" style="left:10px;top:82px;width:20px;height:3px;background:repeating-linear-gradient(90deg,#2c2c2c 0,#2c2c2c 1px,#5f5f5f 1px,#5f5f5f 2px);"></div>
<svg class="b" style="left:0;top:78px" width="41" height="618" viewBox="0 78 41 618"><defs><linearGradient id="tg" x1="0" y1="0" x2="0" y2="1"><stop offset="0" stop-color="#e2e2e2"/><stop offset="1" stop-color="#a9a9a9"/></linearGradient><linearGradient id="gr" x1="0" y1="0" x2="1" y2="0"><stop offset="0" stop-color="#3b3b3b"/><stop offset="1" stop-color="#c4c4c4"/></linearGradient></defs><path d="M11.2 99 L11.8 108.9 L14.2 106.6 L19.2 105.8 Z" fill="url(#tg)"/><path d="M23.6 103.4 L25.4 105.6 H24.2 V107.5 H26.2 V106.3 L28.4 108.1 L26.2 109.9 V108.7 H24.2 V110.6 H25.4 L23.6 112.8 L21.8 110.6 H23 V108.7 H21 V109.9 L18.8 108.1 L21 106.3 V107.5 H23 V105.6 H21.8 Z" fill="#dcdcdc"/><ellipse cx="19" cy="131.7" rx="8" ry="7.1" fill="none" stroke="#d4d4d4" stroke-width="1.3" stroke-dasharray="3.2 1.7"/><path d="M30.7 139.1 V141.9 H27.9 Z" fill="#dedede"/><g fill="none" stroke="#cdcdcd" stroke-width="1.4"><ellipse cx="19.6" cy="155.6" rx="8.2" ry="5" transform="rotate(-18 19.6 155.6)"/><path d="M12.6 159.3 C11.2 160.8 12.6 162.8 14.4 162 C15.8 161.2 14.6 159.4 13.2 160.2 C13.6 162.4 14.6 164 15.2 165.4"/></g><path d="M30.7 165.3 V168.1 H27.9 Z" fill="#dedede"/><path d="M20 184.6 L27.6 191.6" stroke="#cfcfcf" stroke-width="2.2"/><path d="M16.4 174.6 L17.4 179 L20.6 176.2 L19 180.2 L23.2 180.6 L19.4 182.6 L22 186 L17.8 184.4 L17 188.6 L15.4 184.6 L11.6 187 L13.6 183 L9.4 182.2 L13.4 180.4 L10.8 176.8 L15 178.8 Z" fill="#d6d6d6"/><path d="M30.7 191.5 V194.3 H27.9 Z" fill="#dedede"/><g fill="#d4d4d4"><rect x="14" y="202.2" width="2.3" height="11.6"/><rect x="11.2" y="205" width="12.2" height="2.3"/><rect x="21" y="205" width="2.3" height="12"/><rect x="14" y="211.5" width="12" height="2.3"/></g><path d="M17 210.8 L25.6 202.2" stroke="#d4d4d4" stroke-width="1"/><path d="M30.7 217 V219.8 H27.9 Z" fill="#dedede"/><rect x="4.5" y="224.5" width="30.5" height="23.5" rx="1.5" fill="#383838" stroke="#2a2a2a"/><g transform="translate(19.2 235.5) rotate(45)"><rect x="-2.1" y="-10" width="4.2" height="6.4" rx="2.1" fill="#d6d6d6"/><rect x="-3.7" y="-4.6" width="7.4" height="2.3" fill="#ececec"/><rect x="-2.5" y="-2.4" width="5" height="1.6" fill="#cfcfcf"/><path d="M-1.9 -0.9 H1.9 V7.4 L0.9 9.6 H-0.9 L-1.9 7.4 Z" fill="#242424" stroke="#ededed" stroke-width="1.1" stroke-linejoin="round"/><circle cx="0" cy="9.4" r="1" fill="#f2f2f2"/></g><path d="M30.7 243.5 V246.3 H27.9 Z" fill="#e8e8e8"/><rect x="5" y="250" width="29" height="1" fill="#3b3b3b"/><rect x="5" y="251" width="29" height="1" fill="#5e5e5e"/><g transform="rotate(-40 19.2 264.4)"><rect x="9.8" y="261" width="18.8" height="6.8" rx="3.2" fill="#b4b4b4" stroke="#d2d2d2" stroke-width="0.7"/><g fill="#636363"><circle cx="16.8" cy="263.2" r="0.8"/><circle cx="19.2" cy="263.2" r="0.8"/><circle cx="21.6" cy="263.2" r="0.8"/><circle cx="16.8" cy="265.6" r="0.8"/><circle cx="19.2" cy="265.6" r="0.8"/><circle cx="21.6" cy="265.6" r="0.8"/></g></g><path d="M30.7 272.3 V275.1 H27.9 Z" fill="#dedede"/><path d="M27.2 283.2 L20.6 290.8" stroke="#bdbdbd" stroke-width="2.5" stroke-linecap="round"/><path d="M18.2 290.2 L21.4 293.2 C21 295 19.6 296.6 17.6 297.4 C15 298.2 12 297.6 9.8 296.6 C13.2 295.6 14.6 292 18.2 290.2 Z" fill="#d6d6d6"/><path d="M30.7 298.3 V301.1 H27.9 Z" fill="#dedede"/><g fill="url(#tg)"><circle cx="18.2" cy="311.6" r="3"/><path d="M16.6 313.6 H19.8 L20.4 318.8 H16 Z"/><rect x="11.2" y="318.8" width="14.9" height="3.6"/><rect x="11.2" y="323.6" width="14.9" height="1.4"/></g><path d="M30.7 324.3 V327.1 H27.9 Z" fill="#dedede"/><path d="M26.8 336.4 L19.4 343.6" stroke="#c6c6c6" stroke-width="2.2" stroke-linecap="round"/><path d="M18 342 L20.8 344.8 C20.4 346.6 19 348 17.2 348.6 C15 349.2 12.6 348.6 10.8 347.8 C13.8 346.8 15 343.4 18 342 Z" fill="#d6d6d6"/><path d="M21.4 337.2 C18.4 336.2 15.6 337 14.2 339.2" fill="none" stroke="#cfcfcf" stroke-width="1.5"/><path d="M11.6 338 L16.4 338.2 L13.6 342.2 Z" fill="#cfcfcf"/><g fill="#cfcfcf"><circle cx="25.6" cy="342.6" r="0.6"/><circle cx="25" cy="345" r="0.6"/><circle cx="23.4" cy="347" r="0.6"/></g><path d="M30.7 350.4 V353.2 H27.9 Z" fill="#dedede"/><path d="M14.2 367 L20.4 361.6 L28 362.8 L21.2 368.4 Z" fill="#d8d8d8"/><path d="M11.2 368.8 H20.4 L20 374.8 H11.2 Z" fill="#a6a6a6"/><path d="M21.2 368.4 L28 362.8 L27.4 368.6 L20.8 374.6 Z" fill="#bdbdbd"/><path d="M11.2 368.8 L14.2 367 L21.2 368.4 L20.4 368.8 Z" fill="#c6c6c6"/><path d="M30.7 376.5 V379.3 H27.9 Z" fill="#dedede"/><rect x="11.5" y="389" width="15.5" height="11.8" fill="url(#gr)" stroke="#d0d0d0" stroke-width="1"/><path d="M30.7 402.3 V405.1 H27.9 Z" fill="#dedede"/><path d="M17.6 412.4 C19.6 416.4 23.6 419 23.6 423 A5.6 5.6 0 0 1 12.4 423 C12.4 419 16 416.4 17.6 412.4 Z" fill="url(#tg)"/><path d="M30.7 428.2 V431 H27.9 Z" fill="#dedede"/><path d="M19.2 447.6 L25.8 453.8" stroke="#c4c4c4" stroke-width="2.2" stroke-linecap="round"/><circle cx="16" cy="444.3" r="5" fill="#bcbcbc"/><path d="M30.7 454 V456.8 H27.9 Z" fill="#dedede"/><rect x="5" y="461" width="29" height="1" fill="#3b3b3b"/><rect x="5" y="462" width="29" height="1" fill="#5e5e5e"/><path d="M11 483.4 L14.2 473.8 L21 469.6 L25.6 474.4 L21 481 Z" fill="url(#tg)"/><path d="M11 483.4 L17.6 476.8" stroke="#4a4a4a" stroke-width="0.9"/><circle cx="18" cy="476.4" r="1.3" fill="#3c3c3c"/><path d="M22 468.6 L24.4 466.2 L29 471 L26.6 473.4 Z" fill="#d6d6d6"/><path d="M30.7 483.5 V486.3 H27.9 Z" fill="#dedede"/><path d="M12.9 496 H25.7 V499.8 H24.9 C24.7 498.1 24.1 497.5 22.5 497.5 H20.5 V505.6 C20.5 506.6 20.9 506.9 22.3 507 V507.7 H16.3 V507 C17.7 506.9 18.1 506.6 18.1 505.6 V497.5 H16.1 C14.5 497.5 13.9 498.1 13.7 499.8 H12.9 Z" fill="url(#tg)"/><path d="M30.7 509.1 V511.9 H27.9 Z" fill="#dedede"/><path d="M14 519.4 V534.2 L17.6 530.8 L20 536.4 L22.6 535.2 L20.2 529.8 L24.8 529.6 Z" fill="#1e1e1e" stroke="#e2e2e2" stroke-width="1.1" stroke-linejoin="miter"/><path d="M30.7 535.1 V537.9 H27.9 Z" fill="#dedede"/><path d="M12.2 561 L25 547.6" stroke="#dadada" stroke-width="1.6"/><path d="M30.7 561.4 V564.2 H27.9 Z" fill="#dedede"/><rect x="5" y="568" width="29" height="1" fill="#3b3b3b"/><rect x="5" y="569" width="29" height="1" fill="#5e5e5e"/><path d="M15.2 591 C13.6 588 11.6 585.6 10.2 583.6 C10 582.4 11.4 582 12.4 582.8 L14.8 585 L14 577.6 C14 576.2 15.8 576.2 16.2 577.6 L17 582 L17.2 575.8 C17.4 574.4 19.2 574.4 19.4 575.8 L19.8 582 L21 576.8 C21.4 575.4 23.2 575.8 23 577.2 L22.6 583 L24.8 579.6 C25.6 578.4 27.2 579.2 26.6 580.6 C25.4 584 24.6 587.4 23.6 591 Z" fill="url(#tg)"/><path d="M30.7 590.6 V593.4 H27.9 Z" fill="#dedede"/><path d="M21.4 610 L26.4 614.6" stroke="#c4c4c4" stroke-width="2.8" stroke-linecap="round"/><circle cx="17.6" cy="606.4" r="5" fill="#8f8f8f" stroke="#c8c8c8" stroke-width="1.5"/><rect x="7.6" y="628.6" width="6.6" height="6.2" fill="#e0e0e0" stroke="#9a9a9a" stroke-width="0.8"/><rect x="4.4" y="625.6" width="6.6" height="6.2" fill="#1c1c1c" stroke="#c8c8c8" stroke-width="0.9"/><path d="M25 627 C28.6 627 30.2 628.6 30.2 631.4" fill="none" stroke="#d6d6d6" stroke-width="1.5"/><path d="M22.2 627 L25.6 624.4 V629.6 Z" fill="#d6d6d6"/><path d="M30.2 634.4 L27.6 631 H32.8 Z" fill="#d6d6d6"/><rect x="14.6" y="650.8" width="18.8" height="18.4" fill="#faf6f6" stroke="#2e2e2e" stroke-width="1"/><rect x="4.6" y="641" width="19" height="18.4" fill="#fff" stroke="#2e2e2e" stroke-width="1"/><rect x="6" y="642.4" width="16.2" height="15.6" fill="#8fe2fa"/><rect x="10.2" y="678.4" width="16.6" height="12.6" fill="#3f3f3f" stroke="#d8d8d8" stroke-width="1.1"/><circle cx="18.5" cy="684.7" r="3.8" fill="none" stroke="#e6e6e6" stroke-width="1.1" stroke-dasharray="1 1.1"/></svg>
<div class="b" style="left:663px;top:78px;width:37px;height:618px;background:#535353;border-top:1px solid #646464;"></div>
<div class="b" style="left:672px;top:82px;width:20px;height:3px;background:repeating-linear-gradient(90deg,#2c2c2c 0,#2c2c2c 1px,#5f5f5f 1px,#5f5f5f 2px);"></div>
<svg class="b" style="left:674px;top:93px;" width="17" height="17" viewBox="0 0 17 17"><defs><linearGradient id="ig" x1="0" y1="0" x2="0" y2="1"><stop offset="0" stop-color="#dadada"/><stop offset="1" stop-color="#a6a6a6"/></linearGradient></defs><circle cx="8.5" cy="8.5" r="8" fill="url(#ig)"/><circle cx="8.5" cy="4.6" r="1.5" fill="#4c4c4c"/><rect x="7.1" y="7.2" width="2.8" height="6.4" fill="#4c4c4c"/></svg>
<div class="b" style="left:663px;top:118px;width:37px;height:1px;background:#303030;"></div>
<div class="b" style="left:663px;top:119px;width:37px;height:577px;background:#505050;border-top:1px solid #5c5c5c;"></div>
<div class="b" style="left:703px;top:78px;width:227px;height:250px;background:#535353;"></div>
<div class="b" style="left:703px;top:78px;width:227px;height:17px;background:linear-gradient(#3f3f3f,#373737);"></div>
<div class="b" style="left:703px;top:78px;width:37px;height:17px;background:linear-gradient(#454545,#3b3b3b);border-right:1px solid #2c2c2c;border-top:1px solid #4a4a4a;"></div>
<span class="t" style="left:710.5px;top:81.2px;font-size:11px;line-height:13px;color:#9a9a9a;">颜色</span>
<div class="b" style="left:740px;top:78px;width:37px;height:17px;background:linear-gradient(#454545,#3b3b3b);border-right:1px solid #2c2c2c;border-top:1px solid #4a4a4a;"></div>
<span class="t" style="left:747.5px;top:81.2px;font-size:11px;line-height:13px;color:#9a9a9a;">色板</span>
<div class="b" style="left:777px;top:78px;width:37px;height:18px;background:linear-gradient(#5c5c5c,#535353);border-left:1px solid #303030;border-right:1px solid #303030;"></div>
<span class="t" style="left:784.5px;top:81.2px;font-size:11px;line-height:13px;color:#f2f2f2;">属性</span>
<div class="b" style="left:814px;top:78px;width:37px;height:17px;background:linear-gradient(#454545,#3b3b3b);border-right:1px solid #2c2c2c;border-top:1px solid #4a4a4a;"></div>
<span class="t" style="left:821.5px;top:81.2px;font-size:11px;line-height:13px;color:#9a9a9a;">字符</span>
<span class="t" style="left:712.9px;top:106.6px;font-size:11.5px;line-height:13.5px;color:#f6f6f6;">无属性</span>
<div class="b" style="left:703px;top:128px;width:227px;height:1px;background:#3c3c3c;"></div>
<div class="b" style="left:703px;top:129px;width:227px;height:1px;background:#686868;"></div>
<div class="b" style="left:703px;top:309px;width:227px;height:1px;background:#3c3c3c;"></div>
<div class="b" style="left:703px;top:310px;width:227px;height:1px;background:#646464;"></div>
<svg class="b" style="left:911px;top:313px;" width="13" height="14" viewBox="0 0 13 14"><g fill="none" stroke="#777" stroke-width="1"><path d="M1 3.5 H12 M4.5 3.5 V1.5 H8.5 V3.5"/><path d="M2.2 4.5 L2.8 13 H10.2 L10.8 4.5 Z"/><path d="M5 6 V11.5 M6.5 6 V11.5 M8 6 V11.5"/></g></svg>
<div class="b" style="left:703px;top:328px;width:227px;height:3px;background:#2b2b2b;"></div>
<div class="b" style="left:703px;top:331px;width:227px;height:129px;background:#535353;"></div>
<div class="b" style="left:703px;top:331px;width:227px;height:17px;background:linear-gradient(#3f3f3f,#373737);"></div>
<div class="b" style="left:703px;top:331px;width:37px;height:18px;background:linear-gradient(#5c5c5c,#535353);border-left:1px solid #303030;border-right:1px solid #303030;"></div>
<span class="t" style="left:710.5px;top:334.2px;font-size:11px;line-height:13px;color:#f2f2f2;">调整</span>
<div class="b" style="left:740px;top:331px;width:37px;height:17px;background:linear-gradient(#454545,#3b3b3b);border-right:1px solid #2c2c2c;border-top:1px solid #4a4a4a;"></div>
<span class="t" style="left:747.5px;top:334.2px;font-size:11px;line-height:13px;color:#9a9a9a;">样式</span>
<span class="t" style="left:712.4px;top:355.2px;font-size:11.6px;line-height:13.6px;color:#f8f8f8;">添加调整</span>
<svg class="b" style="left:703px;top:370px" width="227" height="88" viewBox="703 370 227 88"><defs><linearGradient id="a1" x1="0" y1="0" x2="1" y2="0"><stop offset="0" stop-color="#3e3e3e"/><stop offset="1" stop-color="#c8c8c8"/></linearGradient><linearGradient id="a2" x1="0" y1="0" x2="0" y2="1"><stop offset="0" stop-color="#d6d6d6"/><stop offset="1" stop-color="#8e8e8e"/></linearGradient><linearGradient id="a3" x1="0" y1="0" x2="1" y2="1"><stop offset="0" stop-color="#b8b8b8"/><stop offset="0.5" stop-color="#6e6e6e"/><stop offset="1" stop-color="#b8b8b8"/></linearGradient></defs><circle cx="759.4" cy="386.5" r="4.2" fill="#5a5a5a" stroke="#d2d2d2" stroke-width="1.2"/><path d="M759.4 382.3 a4.2 4.2 0 0 1 0 8.4 Z" fill="#d2d2d2"/><path d="M765.7 386.5 L768.2 386.5" stroke="#d2d2d2" stroke-width="1.7"/><path d="M763.85 390.95 L765.62 392.72" stroke="#d2d2d2" stroke-width="1.7"/><path d="M759.4 392.8 L759.4 395.3" stroke="#d2d2d2" stroke-width="1.7"/><path d="M754.95 390.95 L753.18 392.72" stroke="#d2d2d2" stroke-width="1.7"/><path d="M753.1 386.5 L750.6 386.5" stroke="#d2d2d2" stroke-width="1.7"/><path d="M754.95 382.05 L753.18 380.28" stroke="#d2d2d2" stroke-width="1.7"/><path d="M759.4 380.2 L759.4 377.7" stroke="#d2d2d2" stroke-width="1.7"/><path d="M763.85 382.05 L765.62 380.28" stroke="#d2d2d2" stroke-width="1.7"/><g fill="#d2d2d2"><rect x="775" y="387" width="1.2" height="4"/><rect x="776.55" y="384" width="1.2" height="7"/><rect x="778.1" y="386" width="1.2" height="5"/><rect x="779.65" y="382" width="1.2" height="9"/><rect x="781.2" y="385" width="1.2" height="6"/><rect x="782.75" y="380" width="1.2" height="11"/><rect x="784.3" y="384" width="1.2" height="7"/><rect x="785.85" y="382" width="1.2" height="9"/><rect x="787.4" y="386" width="1.2" height="5"/><rect x="788.95" y="383" width="1.2" height="8"/><rect x="790.5" y="387" width="1.2" height="4"/><rect x="792.05" y="384" width="1.2" height="7"/><rect x="775" y="387.5" width="18.4" height="3.6"/></g><rect x="800.5" y="380.5" width="15.2" height="12.4" fill="#7a7a7a" stroke="#d2d2d2" stroke-width="1"/><path d="M800.5 384.4 H815.7 M800.5 388.6 H815.7 M805.6 380.5 V392.4 M810.7 380.5 V392.4" stroke="#b4b4b4" stroke-width="0.8"/><path d="M801 392 C808 392 808 381 815.4 380.8" fill="none" stroke="#ececec" stroke-width="1.4"/><rect x="824.5" y="380.5" width="15.2" height="12.4" fill="#c4c4c4" stroke="#d2d2d2" stroke-width="1"/><path d="M824.8 392.6 L839.4 380.8 V392.6 Z" fill="#474747"/><path d="M826.6 384.2 H830.6 M828.6 382.2 V386.2" stroke="#3a3a3a" stroke-width="1.1"/><path d="M833.6 389.4 H837.6" stroke="#e0e0e0" stroke-width="1.1"/><path d="M848.4 379.4 H864 L856.2 393.8 Z" fill="#7e7e7e" stroke="#d2d2d2" stroke-width="1.3" stroke-linejoin="miter"/><rect x="740.3" y="407.7" width="15.2" height="12.4" fill="url(#a2)" stroke="#d2d2d2" stroke-width="1"/><rect x="740.8" y="408.2" width="14.2" height="4" fill="url(#a1)"/><g stroke="#d2d2d2" fill="none" stroke-width="1.2"><path d="M771.5 405.4 V411 M765 409 H778 M765.6 409.4 L763.4 415.6 M765.6 409.4 L767.8 415.6 M777.4 409.4 L775.2 415.6 M777.4 409.4 L779.6 415.6"/></g><path d="M762.6 415.6 H768.6 A3 3 0 0 1 762.6 415.6 Z M774.4 415.6 H780.4 A3 3 0 0 1 774.4 415.6 Z" fill="#d2d2d2"/><rect x="769.6" y="405" width="3.8" height="3" fill="#d2d2d2"/><rect x="788.3" y="407.7" width="15.2" height="12.4" fill="#4a4a4a" stroke="#d2d2d2" stroke-width="1"/><rect x="796" y="408.2" width="7.5" height="11.4" fill="#c8c8c8"/><rect x="811.4" y="406.6" width="13" height="9.4" rx="1" fill="#c2c2c2"/><rect x="814" y="405" width="4" height="2" fill="#c2c2c2"/><circle cx="819.4" cy="411.4" r="2.6" fill="#5a5a5a"/><circle cx="823.4" cy="415.6" r="4.6" fill="#8e8e8e" fill-opacity="0.85" stroke="#d2d2d2" stroke-width="1.1"/><g stroke="#6a6a6a" stroke-width="0.6"><circle cx="843.6" cy="410" r="4.4" fill="#d4d4d4"/><circle cx="839.8" cy="416" r="4.4" fill="#bdbdbd"/><circle cx="847.4" cy="416" r="4.4" fill="#c8c8c8"/></g><path d="M843.6 412.2 L841.4 416.4 H845.8 Z" fill="#4e4e4e"/><rect x="860.5" y="407.7" width="15.2" height="12.4" fill="#767676" stroke="#d2d2d2" stroke-width="1"/><path d="M860.5 411.4 H875.7 M860.5 415.6 H875.7 M865.6 407.7 V419.6 M870.7 407.7 V419.6" stroke="#d2d2d2" stroke-width="1"/><rect x="752.5" y="434.5" width="15.2" height="12.4" fill="#b2b2b2" stroke="#d2d2d2" stroke-width="1"/><path d="M752.8 446 L766.8 434.8 V446 Z" fill="#5c5c5c"/><ellipse cx="759.6" cy="440.4" rx="3.6" ry="2.6" transform="rotate(-35 759.6 440.4)" fill="#4a4a4a"/><rect x="776.5" y="434.5" width="15.2" height="12.4" fill="url(#a3)" stroke="#d2d2d2" stroke-width="1"/><rect x="800.5" y="434.5" width="15.2" height="12.4" fill="#b4b4b4" stroke="#d2d2d2" stroke-width="1"/><path d="M801 445.4 V442 H804 V440 H808 V438 H812 V436 H815.2 V439 H812 V441.4 H808 V443.4 H804 V445.4 Z" fill="#3e3e3e"/><rect x="824.5" y="434.5" width="15.2" height="12.4" fill="#9a9a9a" stroke="#d2d2d2" stroke-width="1"/><path d="M824.8 434.8 L831.8 440.4 L824.8 446 Z M839.4 434.8 L832.4 440.4 L839.4 446 Z" fill="#6a6a6a"/><path d="M824.8 434.8 L839.4 446 M839.4 434.8 L824.8 446" stroke="#d2d2d2" stroke-width="0.8"/><rect x="848.7" y="434.5" width="15.2" height="12.4" fill="url(#a1)" stroke="#d2d2d2" stroke-width="1"/></svg>
<div class="b" style="left:703px;top:460px;width:227px;height:3px;background:#2b2b2b;"></div>
<div class="b" style="left:703px;top:462px;width:227px;height:234px;background:#535353;"></div>
<div class="b" style="left:703px;top:463px;width:227px;height:17px;background:linear-gradient(#3f3f3f,#373737);"></div>
<div class="b" style="left:703px;top:463px;width:37px;height:18px;background:linear-gradient(#5c5c5c,#535353);border-left:1px solid #303030;border-right:1px solid #303030;"></div>
<span class="t" style="left:710.5px;top:466.2px;font-size:11px;line-height:13px;color:#f2f2f2;">图层</span>
<div class="b" style="left:740px;top:463px;width:38px;height:17px;background:linear-gradient(#454545,#3b3b3b);border-right:1px solid #2c2c2c;border-top:1px solid #4a4a4a;"></div>
<span class="t" style="left:748px;top:466.2px;font-size:11px;line-height:13px;color:#9a9a9a;">通道</span>
<div class="b" style="left:778px;top:463px;width:38px;height:17px;background:linear-gradient(#454545,#3b3b3b);border-right:1px solid #2c2c2c;border-top:1px solid #4a4a4a;"></div>
<span class="t" style="left:786px;top:466.2px;font-size:11px;line-height:13px;color:#9a9a9a;">路径</span>
<div class="b" style="left:816px;top:463px;width:38px;height:17px;background:linear-gradient(#454545,#3b3b3b);border-right:1px solid #2c2c2c;border-top:1px solid #4a4a4a;"></div>
<span class="t" style="left:824px;top:466.2px;font-size:11px;line-height:13px;color:#9a9a9a;">段落</span>
<div class="b" style="left:854px;top:463px;width:60px;height:17px;background:linear-gradient(#454545,#3b3b3b);border-right:1px solid #2c2c2c;border-top:1px solid #4a4a4a;"></div>
<span class="t" style="left:862px;top:466.2px;font-size:11px;line-height:13px;color:#9a9a9a;">历史记录</span>
<div class="b" style="left:707px;top:483.5px;width:70.5px;height:20.5px;background:linear-gradient(#6a6a6a,#585858);border:1px solid #2e2e2e;border-radius:3px;box-shadow:inset 0 1px 0 #7c7c7c;"></div>
<svg class="b" style="left:713px;top:488px;" width="11" height="12" viewBox="0 0 11 12"><circle cx="6.6" cy="4.2" r="2.7" fill="#7a7a7a" stroke="#d4d4d4" stroke-width="1.3"/><path d="M4.6 6.4 L1.8 9.6" stroke="#d4d4d4" stroke-width="1.7"/></svg>
<span class="t" style="left:729.6px;top:487.3px;font-size:11.5px;line-height:13.5px;color:#f4f4f4;">类型</span>
<svg class="b" style="left:767.7px;top:489.7px;" width="6" height="9" viewBox="0 0 6 9"><path d="M0.3 3.4 L3 0.3 L5.7 3.4 Z M0.3 5.4 L3 8.5 L5.7 5.4 Z" fill="#ededed"/></svg>
<svg class="b" style="left:795px;top:484px" width="120" height="20" viewBox="795 484 120 20"><rect x="799.5" y="488.5" width="12" height="10" fill="#6a6a6a" stroke="#cfcfcf" stroke-width="1"/><path d="M801 497 L804.4 493 L806.6 495.4 L808 494 L810.4 497 Z" fill="#cfcfcf"/><circle cx="808.4" cy="491.4" r="1" fill="#cfcfcf"/><circle cx="829.2" cy="493" r="5.2" fill="#dcdcdc"/><path d="M825.5 496.7 A5.2 5.2 0 0 0 832.9 489.3 Z" fill="#767676"/><circle cx="829.2" cy="493" r="5.2" fill="none" stroke="#cfcfcf" stroke-width="0.8"/><text x="853" y="498.2" font-family="Liberation Serif, serif" font-weight="bold" font-size="15" text-anchor="middle" fill="#cfcfcf">T</text><rect x="873.6" y="489.4" width="8" height="8" fill="none" stroke="#cfcfcf" stroke-width="1.1"/><rect x="872.3" y="488.1" width="2.6" height="2.6" fill="#535353" stroke="#cfcfcf" stroke-width="0.9"/><rect x="880.3" y="488.1" width="2.6" height="2.6" fill="#535353" stroke="#cfcfcf" stroke-width="0.9"/><rect x="872.3" y="496.1" width="2.6" height="2.6" fill="#535353" stroke="#cfcfcf" stroke-width="0.9"/><rect x="880.3" y="496.1" width="2.6" height="2.6" fill="#535353" stroke="#cfcfcf" stroke-width="0.9"/><path d="M899 488 H904.6 L907.2 490.6 V499.6 H899 Z" fill="#6a6a6a" stroke="#cfcfcf" stroke-width="1"/><path d="M904.6 488 V490.6 H907.2" fill="none" stroke="#cfcfcf" stroke-width="0.9"/><rect x="896" y="493.6" width="5.8" height="5.8" fill="#cfcfcf"/></svg>
<div class="b" style="left:703px;top:507px;width:227px;height:1px;background:#3c3c3c;"></div>
<div class="b" style="left:703px;top:508px;width:227px;height:1px;background:#626262;"></div>
<div class="b" style="left:707px;top:511.5px;width:110px;height:20.5px;background:linear-gradient(#6a6a6a,#585858);border:1px solid #2e2e2e;border-radius:3px;box-shadow:inset 0 1px 0 #7c7c7c;"></div>
<span class="t" style="left:715.8px;top:515px;font-size:11.5px;line-height:13.5px;color:#f4f4f4;">正常</span>
<svg class="b" style="left:807.7px;top:517.7px;" width="6" height="9" viewBox="0 0 6 9"><path d="M0.3 3.4 L3 0.3 L5.7 3.4 Z M0.3 5.4 L3 8.5 L5.7 5.4 Z" fill="#ededed"/></svg>
<span class="t" style="left:826px;top:515px;font-size:11.6px;line-height:13.6px;color:#f4f4f4;">不透明度<span style="margin-left:2.32px">:</span></span>
<div class="b" style="left:883px;top:512px;width:36px;height:19.5px;background:#393939;border:1px solid #303030;border-right:none;border-radius:2px 0 0 2px;"></div>
<span class="t" style="left:887.4px;top:515.4px;font-size:11.5px;line-height:13.5px;color:#f2f2f2;transform:scaleX(0.93);"><svg class="cj" width="29.41" height="9.2" fill="#f2f2f2"><text x="0" y="9.2" font-size="11.5" textLength="29.41" lengthAdjust="spacingAndGlyphs" style="white-space:pre">100%</text></svg></span>
<div class="b" style="left:919px;top:512px;width:12px;height:19.5px;background:linear-gradient(#626262,#575757);border:1px solid #303030;"></div>
<svg class="b" style="left:925.3px;top:520.5px;" width="8" height="5" viewBox="0 0 8 5"><path d="M0.5 0.5 H6.5 L3.5 4 Z" fill="#e6e6e6"/></svg>
<div class="b" style="left:703px;top:535px;width:227px;height:1px;background:#454545;"></div>
<div class="b" style="left:703px;top:536px;width:227px;height:1px;background:#5d5d5d;"></div>
<span class="t" style="left:709px;top:542.6px;font-size:11.6px;line-height:13.6px;color:#f4f4f4;">锁定<span style="margin-left:2.32px">:</span></span>
<svg class="b" style="left:745px;top:540px" width="85" height="20" viewBox="745 540 85 20"><rect x="747" y="545" width="11.4" height="11.4" fill="#8e8e8e"/><rect x="747" y="545" width="3.8" height="3.8" fill="#e2e2e2"/><rect x="747" y="552.6" width="3.8" height="3.8" fill="#e2e2e2"/><rect x="750.8" y="548.8" width="3.8" height="3.8" fill="#e2e2e2"/><rect x="754.6" y="545" width="3.8" height="3.8" fill="#e2e2e2"/><rect x="754.6" y="552.6" width="3.8" height="3.8" fill="#e2e2e2"/><path d="M783.6 544.8 L774.6 552.6" stroke="#d2d2d2" stroke-width="2" stroke-linecap="round"/><path d="M773 551 L775.8 554 C774.6 556.6 770.6 557.4 767.4 556.2 C770 555.4 770.6 552.4 773 551 Z" fill="#d8d8d8"/><path d="M796.4 544.4 L798.6 547 H797.2 V549.6 H800 V548.2 L802.6 550.4 L800 552.6 V551.2 H797.2 V553.8 H798.6 L796.4 556.4 L794.2 553.8 H795.6 V551.2 H792.8 V552.6 L790.2 550.4 L792.8 548.2 V549.6 H795.6 V547 H794.2 Z" fill="#d8d8d8"/><rect x="814" y="549.6" width="10" height="7" rx="0.8" fill="#d4d4d4"/><path d="M816.2 549.8 V547.6 A2.8 2.8 0 0 1 821.8 547.6 V549.8" fill="none" stroke="#d4d4d4" stroke-width="1.6"/><rect x="818.3" y="551.6" width="1.4" height="3" fill="#555"/></svg>
<span class="t" style="left:850.3px;top:542.6px;font-size:11.6px;line-height:13.6px;color:#f4f4f4;">填充<span style="margin-left:2.32px">:</span></span>
<div class="b" style="left:883px;top:540.5px;width:36px;height:19.5px;background:#393939;border:1px solid #303030;border-right:none;border-radius:2px 0 0 2px;"></div>
<span class="t" style="left:887.4px;top:543.6px;font-size:11.5px;line-height:13.5px;color:#f2f2f2;transform:scaleX(0.93);"><svg class="cj" width="29.41" height="9.2" fill="#f2f2f2"><text x="0" y="9.2" font-size="11.5" textLength="29.41" lengthAdjust="spacingAndGlyphs" style="white-space:pre">100%</text></svg></span>
<div class="b" style="left:919px;top:540.5px;width:12px;height:19.5px;background:linear-gradient(#626262,#575757);border:1px solid #303030;"></div>
<svg class="b" style="left:925.3px;top:549px;" width="8" height="5" viewBox="0 0 8 5"><path d="M0.5 0.5 H6.5 L3.5 4 Z" fill="#e6e6e6"/></svg>
<div class="b" style="left:703px;top:565px;width:227px;height:1px;background:#383838;"></div>
<div class="b" style="left:703px;top:566px;width:227px;height:38px;background:#535353;"></div>
<div class="b" style="left:733px;top:566px;width:1px;height:78px;background:#3d3d3d;"></div>
<svg class="b" style="left:711px;top:579px;" width="15" height="11" viewBox="0 0 15 11"><path d="M0.8 5.5 C3.5 1.2 11.5 1.2 14.2 5.5 C11.5 9.8 3.5 9.8 0.8 5.5 Z" fill="#b9b9b9"/><circle cx="7.5" cy="5.3" r="2.6" fill="#4a4a4a"/><circle cx="7.5" cy="5.3" r="1.1" fill="#b9b9b9"/></svg>
<div class="b" style="left:737px;top:569px;width:32px;height:32px;background-color:#fff;background-image:linear-gradient(45deg,#cfcfcf 25%,transparent 25%,transparent 75%,#cfcfcf 75%),linear-gradient(45deg,#cfcfcf 25%,transparent 25%,transparent 75%,#cfcfcf 75%);background-size:8px 8px;background-position:0 0,4px 4px;border:1px solid #111;"></div>
<span class="t" style="left:778.5px;top:579px;font-size:12px;line-height:14px;color:#f4f4f4;">图层<svg class="cj" width="10.01" height="9.6" fill="#f4f4f4"><text x="0" y="9.6" font-size="12" textLength="10.01" lengthAdjust="spacingAndGlyphs" style="white-space:pre"> 2</text></svg></span>
<div class="b" style="left:703px;top:604px;width:227px;height:1px;background:#3a3a3a;"></div>
<div class="b" style="left:703px;top:605px;width:227px;height:39px;background:#585858;"></div>
<div class="b" style="left:734px;top:605px;width:196px;height:39px;background:#5a6a80;"></div>
<div class="b" style="left:733px;top:605px;width:1px;height:39px;background:#3d3d3d;"></div>
<div class="b" style="left:737px;top:607.5px;width:32px;height:32px;background:linear-gradient(#98dff7,#bdf0f6 70%,#e6fafa);border:1px solid #111;"></div>
<svg class="b" style="left:735px;top:605.5px;" width="36" height="36" viewBox="0 0 36 36"><path d="M0.6 6 V0.6 H6 M30 0.6 H35.4 V6 M0.6 30 V35.4 H6 M30 35.4 H35.4 V30" fill="none" stroke="#f2f2f2" stroke-width="1.2"/></svg>
<span class="t" style="left:778.5px;top:617.5px;font-size:12px;line-height:14px;color:#f4f4f4;">图层</span>
<svg class="b" style="left:703px;top:630px;" width="227" height="20" viewBox="0 0 227 20"><path d="M0 20 V16 L18 15 L40 13 L60 12 L88 12 L104 13 L112 17 L124 21 L140 16 L150 17 L156 13 L166 15 L178 12.6 L190 14 L196 12 L210 14 L227 13.6 V20 Z" fill="#535353"/></svg>
<div class="b" style="left:703px;top:644px;width:227px;height:40px;background:#535353;"></div>
<svg class="b" style="left:912.5px;top:656px;" width="10" height="14" viewBox="0 0 10 14"><path d="M2.6 6 V4 A2.2 2.2 0 0 1 7 4 V4.8" fill="none" stroke="#d8d8d8" stroke-width="1.2"/><rect x="1.1" y="5.8" width="7.4" height="6.6" fill="#5c5c5c" stroke="#e6e6e6" stroke-width="1.1"/><rect x="4" y="7.6" width="1.7" height="3" fill="#f0f0f0"/></svg>
<div class="b" style="left:703px;top:683px;width:227px;height:1px;background:#3a3a3a;"></div>
<div class="b" style="left:703px;top:684px;width:227px;height:12px;background:linear-gradient(#4c4c4c,#404040);"></div>
<span class="t" style="left:713px;top:616.5px;font-size:31px;line-height:33px;color:rgba(255,255,255,0.72);transform:scaleX(1.22);font-weight:bold;letter-spacing:-0.5px;text-shadow:0 0 1.5px rgba(120,120,120,0.9);">Bai</span>
<svg class="b" style="left:768px;top:594px;" width="52" height="52" viewBox="0 0 52 52"><g fill="#fff" fill-opacity="0.58"><ellipse cx="18.6" cy="10" rx="5" ry="7.2" transform="rotate(-8 18.6 10)"/><ellipse cx="34.4" cy="11" rx="5" ry="7.2" transform="rotate(10 34.4 11)"/><ellipse cx="7.6" cy="22.4" rx="4.4" ry="6.2" transform="rotate(-25 7.6 22.4)"/><ellipse cx="43.4" cy="24.6" rx="4" ry="6" transform="rotate(28 43.4 24.6)"/></g><path d="M26 19 C36 19 42 31 41 39 C40 50 32 49 26 49 C20 49 11 50 10 39 C9 31 16 19 26 19 Z" fill="#fff" fill-opacity="0.42"/></svg>
</div>
</body></html>
